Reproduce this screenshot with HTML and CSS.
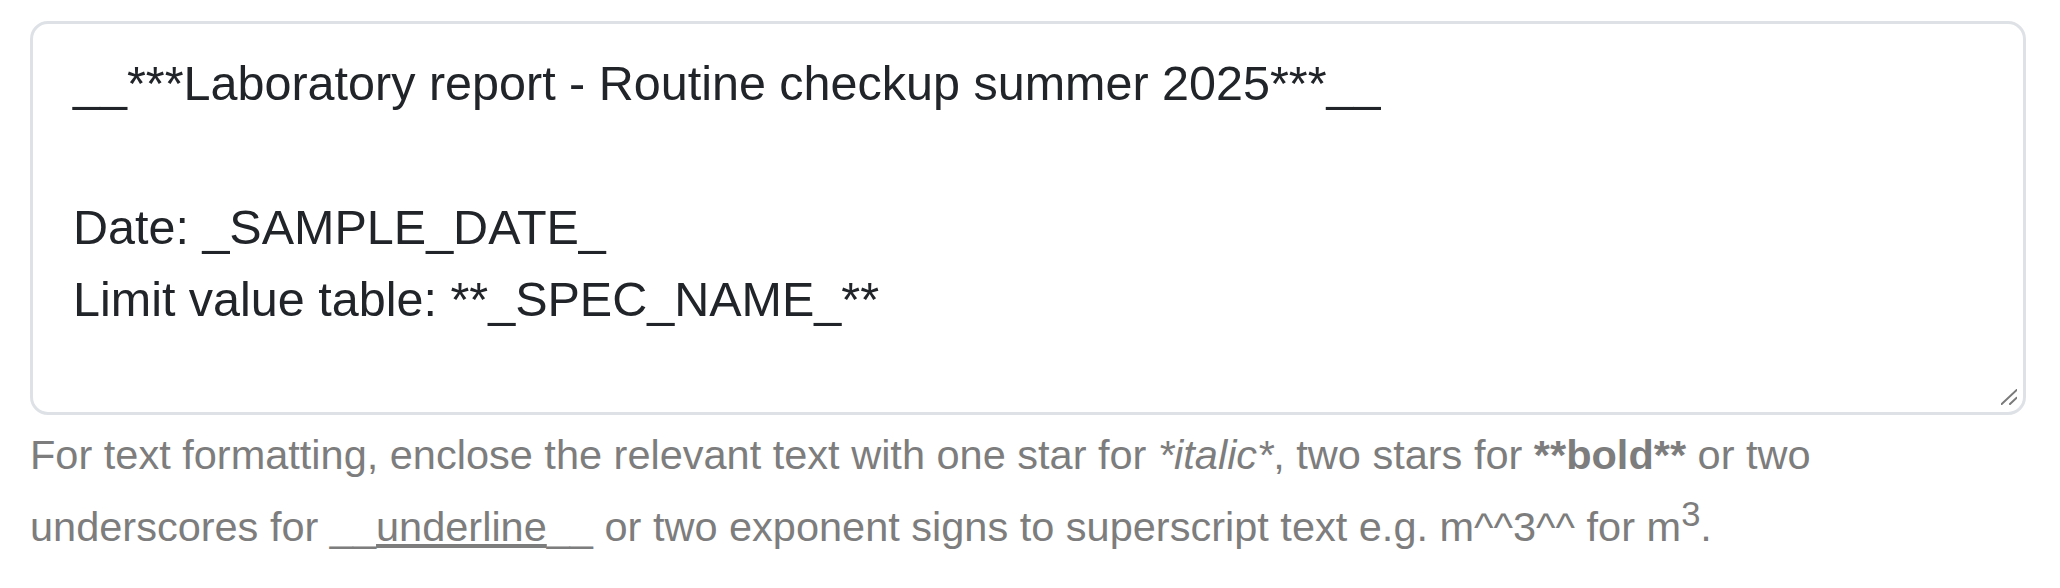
FILE: index.html
```html
<!DOCTYPE HTML>
<html lang="en">
  <head>
    <meta name="viewport" content="width=device-width, initial-scale=1">
    <meta charset="UTF-8">
    <title>Report template</title>
    <link rel="stylesheet" href="styles.css">
  </head>
  <body>
    <main class="template-editor">
      <!-- Поле шаблона -->
      <div class="template-field">
        <textarea class="template-input" id="report-header" rows="5" spellcheck="false">__***Laboratory report - Routine checkup summer 2025***__

Date: _SAMPLE_DATE_
Limit value table: **_SPEC_NAME_**</textarea>
        <svg class="template-grip" width="16" height="16" viewBox="0 0 16 16" aria-hidden="true">
          <line x1="0.7" y1="15" x2="15.7" y2="1"/>
          <line x1="9" y1="15" x2="15.7" y2="8.7"/>
        </svg>
      </div>
      <!-- Подсказка по форматированию -->
      <p class="template-help">For text formatting, enclose the relevant text with one star for <em>*italic*</em>, two stars for <strong>**bold**</strong> or two underscores for __<u>underline</u>__ or two exponent signs to superscript text e.g. m^^3^^ for m<sup>3</sup>.</p>
    </main>
  </body>
</html>
```

FILE: styles.css
```css
/* Основные стили */
html,
body {
  margin: 0;
  padding: 0;
}

body {
  padding: 21px 34px 0 30px;
  font-family: "Liberation Sans", Arial, sans-serif;
  color: #212529;
  background-color: #ffffff;
}

/* Поле шаблона */
.template-field {
  position: relative;
}

.template-input {
  display: block;
  box-sizing: border-box;
  width: 100%;
  height: 394px;
  margin: 0;
  padding: 23px 40px;
  border: 3px solid #dee2e6;
  border-radius: 18px;
  font-family: inherit;
  font-size: 48.5px;
  line-height: 72px;
  color: #212529;
  background: #fff;
  resize: none;
  outline: none;
}

.template-grip {
  position: absolute;
  right: 9px;
  bottom: 10px;
  stroke: #7a7a7a;
  stroke-width: 2;
  stroke-linecap: round;
}

/* Подсказка */
.template-help {
  margin: 4px 0 0;
  font-size: 41.5px;
  line-height: 72px;
  color: #7d7d7d;
}

.template-help sup {
  line-height: 0;
}
```
